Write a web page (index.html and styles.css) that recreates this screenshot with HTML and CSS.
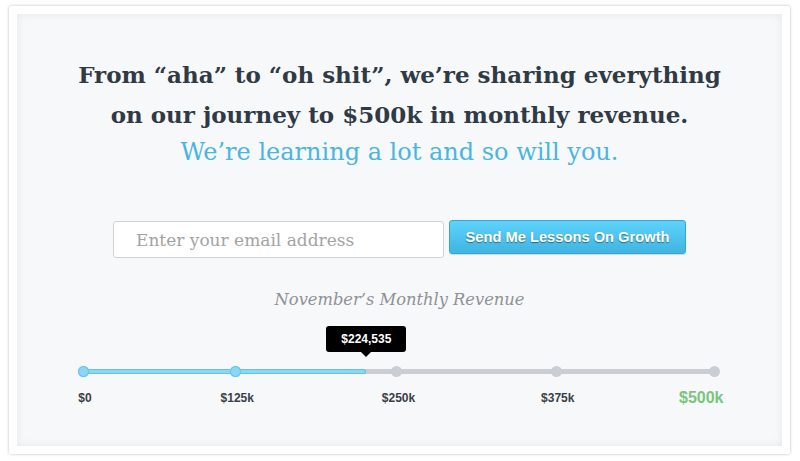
FILE: index.html
```html
<!DOCTYPE html>
<html>
<head>
<meta charset="utf-8">
<link rel="stylesheet" href="styles.css">
</head>
<body>
<div class="frame">
  <div class="panel">
    <h1 class="headline">From “aha” to “oh shit”, we’re sharing everything<br>on our journey to $500k in monthly revenue.</h1>
    <p class="subline">We’re learning a lot and so will you.</p>
    <form class="signup">
      <input class="email" type="text" placeholder="Enter your email address">
      <button class="cta" type="button">Send Me Lessons On Growth</button>
    </form>
    <p class="month">November’s Monthly Revenue</p>
    <div class="progress">
      <div class="track">
        <div class="fill" style="width:44.9%"></div>
        <div class="dots">
          <span class="dot on"></span>
          <span class="dot on"></span>
          <span class="dot"></span>
          <span class="dot"></span>
          <span class="dot"></span>
        </div>
        <div class="tip" style="left:44.9%">$224,535</div>
      </div>
      <div class="labels">
        <span class="lab">$0</span>
        <span class="lab">$125k</span>
        <span class="lab">$250k</span>
        <span class="lab">$375k</span>
        <span class="lab goal">$500k</span>
      </div>
    </div>
  </div>
</div>
</body>
</html>
```
FILE: styles.css
```css
html, body {
  margin: 0;
  padding: 0;
  background: #ffffff;
}
body {
  padding: 6px 10px 7px 9px;
}
.frame {
  width: 765px;
  height: 432px;
  padding: 8px;
  background: #fff;
  border-radius: 2px;
  box-shadow: 0 0 3px rgba(0,0,0,0.28);
}
.panel {
  height: 100%;
  box-sizing: border-box;
  background: #f7f8fa;
  box-shadow: inset 0 0 10px rgba(0,0,0,0.07);
  padding-top: 41px;
  text-align: center;
}
.headline {
  margin: 0;
  font-family: "DejaVu Serif", Georgia, serif;
  font-weight: bold;
  font-size: 23px;
  line-height: 40px;
  color: #2f3a44;
}
.subline {
  margin: 0;
  font-family: "DejaVu Serif", Georgia, serif;
  font-size: 24px;
  line-height: 34px;
  color: #4ab6e0;
}
.signup {
  display: flex;
  justify-content: center;
  align-items: flex-start;
  gap: 5px;
  margin-top: 51px;
}
.email {
  width: 331px;
  height: 37px;
  box-sizing: border-box;
  border: 1px solid #cfd2d6;
  border-radius: 3px;
  background: #fff;
  padding: 0 0 0 22px;
  margin-top: 1px;
  font-family: "DejaVu Serif", Georgia, serif;
  font-size: 17px;
  color: #333;
}
.email::placeholder {
  color: #a3a3a3;
}
.cta {
  width: 237px;
  height: 34px;
  box-sizing: border-box;
  border: 1px solid #3aa5cf;
  border-radius: 3px;
  background: linear-gradient(#5dd3fb, #40b4e2);
  box-shadow: 0 1px 1px rgba(0,0,0,0.15);
  font-family: "Liberation Sans", Arial, sans-serif;
  font-weight: bold;
  font-size: 14.7px;
  color: #fff;
  text-shadow: 0 1px 1px rgba(30,60,20,0.6);
  padding: 0;
}
.month {
  margin: 31px 0 0;
  font-family: "DejaVu Serif", Georgia, serif;
  font-style: italic;
  font-size: 16.3px;
  line-height: 22px;
  color: #8e9196;
}
.progress {
  margin: 58px 0 0 66px;
  width: 631px;
}
.track {
  position: relative;
  height: 5px;
  background: #caced4;
  border-radius: 3px;
}
.fill {
  height: 100%;
  background: #8dd5f5;
  box-shadow: inset 0 0 0 1px #62c3ec;
  border-radius: 3px;
}
.dots,
.labels {
  display: grid;
  grid-template-columns: 152fr 161fr 159fr 158fr 0;
}
.dots {
  position: absolute;
  left: 0;
  right: 0;
  top: -3px;
}
.dot {
  width: 11px;
  height: 11px;
  margin-left: -5px;
  border-radius: 50%;
  background: #caced4;
}
.dot.on {
  background: #8dd5f5;
  box-shadow: inset 0 0 0 1px #62c3ec;
}
.tip {
  position: absolute;
  bottom: 22px;
  transform: translateX(-50%);
  width: 80px;
  height: 26px;
  line-height: 26px;
  background: #000;
  border-radius: 3px;
  color: #fff;
  font-family: "Liberation Sans", Arial, sans-serif;
  font-weight: bold;
  font-size: 12px;
}
.tip::after {
  content: "";
  position: absolute;
  left: 50%;
  bottom: -5px;
  margin-left: -5px;
  border-left: 5px solid transparent;
  border-right: 5px solid transparent;
  border-top: 5px solid #000;
}
.labels {
  align-items: center;
  margin-top: 15px;
  font-family: "Liberation Sans", Arial, sans-serif;
  font-weight: bold;
  font-size: 12px;
  color: #3a3f46;
}
.lab {
  width: 52px;
  margin-left: -24px;
  text-align: center;
}
.lab.goal {
  width: auto;
  margin-left: -35px;
  text-align: left;
  white-space: nowrap;
  font-size: 16px;
  color: #7cc47e;
}
```
